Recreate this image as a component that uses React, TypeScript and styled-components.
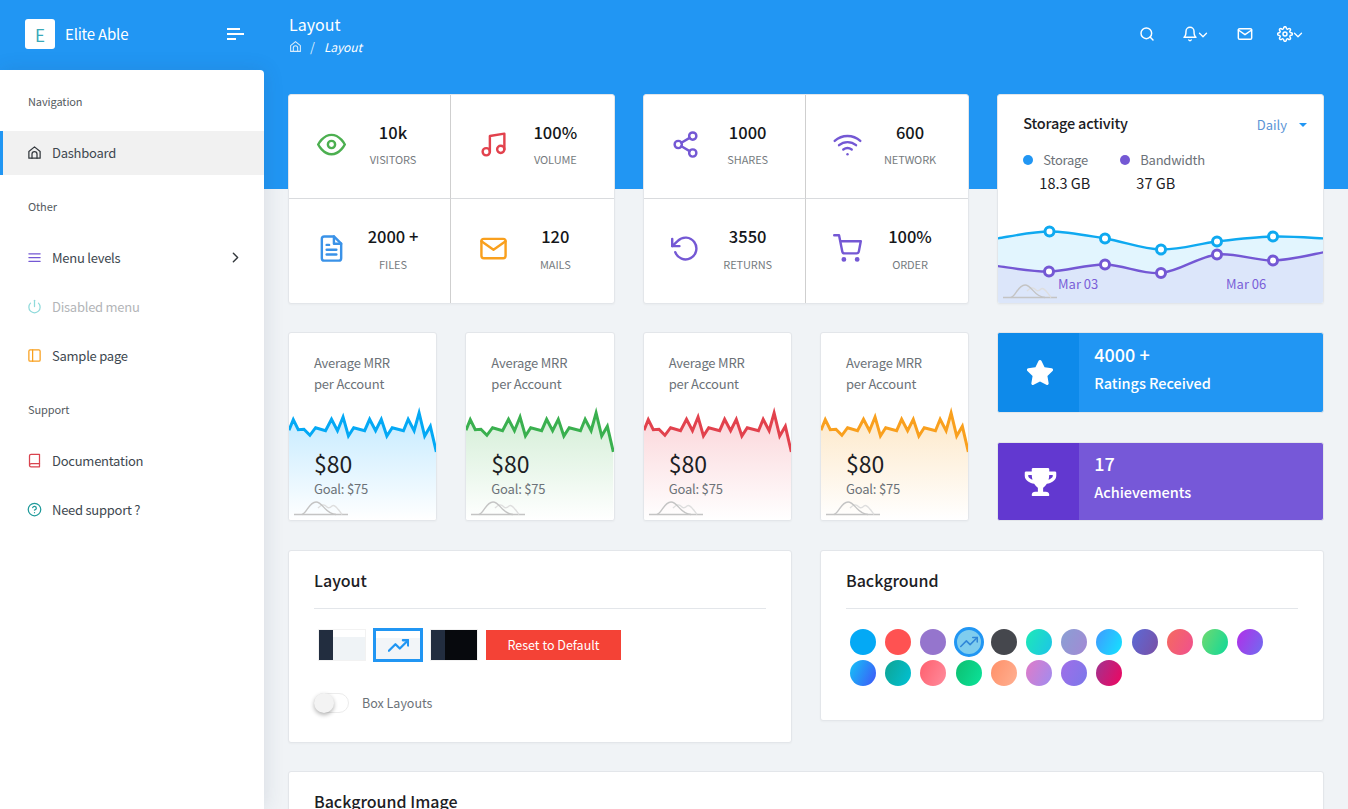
import { ReactNode } from "react";
import styled, { createGlobalStyle } from "styled-components";
import {
  FiBell,
  FiBook,
  FiChevronDown,
  FiChevronRight,
  FiEye,
  FiFileText,
  FiHelpCircle,
  FiMail,
  FiMenu,
  FiMusic,
  FiPower,
  FiRotateCcw,
  FiSearch,
  FiSettings,
  FiShare2,
  FiShoppingCart,
  FiSidebar,
  FiTrendingUp,
  FiWifi,
} from "react-icons/fi";
import { FaStar, FaTrophy } from "react-icons/fa";

const GlobalStyle = createGlobalStyle`
  html, body {
    margin: 0;
    padding: 0;
    overflow: hidden;
  }
  body {
    background: #f0f3f6;
    font-family: "Noto Sans CJK SC", "Source Sans Pro", "Open Sans", sans-serif;
    font-size: 14px;
    line-height: 21px;
    color: #1d2125;
  }
  * {
    box-sizing: border-box;
  }
`;

type Pt = [number, number];

const smoothPath = (pts: Pt[]) => {
  let d = `M${pts[0][0]} ${pts[0][1]}`;
  for (let i = 0; i < pts.length - 1; i++) {
    const p0 = pts[i - 1] || pts[i];
    const p1 = pts[i];
    const p2 = pts[i + 1];
    const p3 = pts[i + 2] || p2;
    const c1x = p1[0] + (p2[0] - p0[0]) / 6;
    const c1y = p1[1] + (p2[1] - p0[1]) / 6;
    const c2x = p2[0] - (p3[0] - p1[0]) / 6;
    const c2y = p2[1] - (p3[1] - p1[1]) / 6;
    d += ` C${c1x} ${c1y} ${c2x} ${c2y} ${p2[0]} ${p2[1]}`;
  }
  return d;
};

const HomeIcon = ({ size = 14 }: { size?: number }) => (
  <svg width={size} height={size} viewBox="0 0 24 24" fill="none" stroke="currentColor" strokeWidth="2" strokeLinejoin="round" strokeLinecap="round">
    <path d="M3 10.5 12 3l9 7.5V21H3z" />
    <path d="M8 21v-6.5a4 4 0 0 1 8 0V21" />
  </svg>
);

const Watermark = () => (
  <WatermarkSvg width="54" height="15" viewBox="0 0 54 15">
    <path d="M0 13.5H54" stroke="#c4c4c4" strokeWidth="1.4" fill="none" />
    <path d="M24 7C28 3 30 3 33 6C35 8 37 6 38 5C41 3 44 8 48 13.5" stroke="#dedede" strokeWidth="1.4" fill="none" />
    <path d="M8 13.5C13 12 15 1 22 1C29 1 31 13 42 13.5" stroke="#c4c4c4" strokeWidth="1.4" fill="none" />
  </WatermarkSvg>
);

interface StatItem {
  icon: ReactNode;
  color: string;
  value: string;
  label: string;
}

const statGroups: StatItem[][] = [
  [
    { icon: <FiEye />, color: "#4caf50", value: "10k", label: "VISITORS" },
    { icon: <FiMusic />, color: "#e2424d", value: "100%", label: "VOLUME" },
    { icon: <FiFileText />, color: "#3a92e8", value: "2000 +", label: "FILES" },
    { icon: <FiMail />, color: "#f9a01e", value: "120", label: "MAILS" },
  ],
  [
    { icon: <FiShare2 />, color: "#7458d4", value: "1000", label: "SHARES" },
    { icon: <FiWifi />, color: "#7458d4", value: "600", label: "NETWORK" },
    { icon: <FiRotateCcw />, color: "#7458d4", value: "3550", label: "RETURNS" },
    { icon: <FiShoppingCart />, color: "#7458d4", value: "100%", label: "ORDER" },
  ],
];

const sparkPoints: Pt[] = [
  [0, 25.3], [4.3, 14.7], [9.3, 24.7], [15, 24.3], [21, 30.3], [26.7, 22.7], [36.7, 25.7], [42.7, 14.3], [48.7, 25.7],
  [54.3, 12], [59.7, 31], [65, 22.7], [76, 25.7], [81, 14.3], [87, 25.7], [92.7, 14.3], [98.3, 31], [103.7, 22.7],
  [115, 25.7], [119.7, 14.3], [125.7, 25.7], [130.7, 8], [136.3, 31], [142, 21.3], [148, 47],
];

const sparkCards = [
  { id: "blue", line: "#04a9f5", top: "#c4eaff" },
  { id: "green", line: "#3ab04f", top: "#d3eed6" },
  { id: "red", line: "#e2424d", top: "#fbd5d9" },
  { id: "orange", line: "#f9a01e", top: "#fde8c8" },
];

const storagePts: Pt[] = [[-1, 13.5], [51.5, 6.5], [107, 13.5], [163, 24.5], [219, 16.5], [275, 11.5], [327, 13.5]];
const bandwidthPts: Pt[] = [[-1, 41], [51, 46.5], [107, 39.5], [163, 48], [219, 29.5], [275, 35.5], [327, 27]];

const swatches = [
  "#04a9f5, #04a9f5", "#ff5252, #ff5252", "#9575cd, #9575cd", "#7fcdee, #7fcdee", "#45474d, #45474d", "#1de9b6, #1dc4e9",
  "#899fd4, #a389d4", "#4099ff, #12e5ff", "#5b6ad6, #7a4fa5", "#f56a5f, #f0508f", "#6fd96f, #0fd99a", "#b22ee8, #6f6df0",
  "#14c4f7, #3f55f8", "#0fa392, #00c2d6", "#ff5f6d, #ff8c9d", "#0dbe6f, #0be39b", "#ff9068, #ffb092", "#e07bc8, #a08cf0",
  "#a06ee8, #7b78ea", "#a03390, #f0055f",
];

const App = () => (
  <Page>
    <GlobalStyle />
    <Header>
      <Brand>
        <LogoBox>E</LogoBox>
        <BrandName>Elite Able</BrandName>
        <Burger width="17" height="12" viewBox="0 0 17 12" stroke="#fff" strokeWidth="1.8">
          <path d="M0 1H13M0 6H17M0 11H9" />
        </Burger>
      </Brand>
      <PageTitle>
        <h1>Layout</h1>
        <Crumbs>
          <HomeIcon size={13} />
          <span>/</span>
          <em>Layout</em>
        </Crumbs>
      </PageTitle>
      <Actions>
        <ActionButton><FiSearch /></ActionButton>
        <ActionButton $gap={27}><FiBell /><FiChevronDown /></ActionButton>
        <ActionButton $gap={27}><FiMail /></ActionButton>
        <ActionButton $gap={24}><FiSettings /><FiChevronDown /></ActionButton>
      </Actions>
    </Header>

    <Body>
      <Sidebar>
        <SectionLabel>Navigation</SectionLabel>
        <NavList>
          <NavItem $active>
            <NavIcon $color="#33383d"><HomeIcon size={15} /></NavIcon>
            Dashboard
          </NavItem>
        </NavList>
        <SectionLabel>Other</SectionLabel>
        <NavList>
          <NavItem>
            <NavIcon $color="#7458d4"><FiMenu /></NavIcon>
            Menu levels
            <NavArrow><FiChevronRight /></NavArrow>
          </NavItem>
          <NavItem $disabled>
            <NavIcon $color="#8fdadb"><FiPower /></NavIcon>
            Disabled menu
          </NavItem>
          <NavItem>
            <NavIcon $color="#f9a01e"><FiSidebar /></NavIcon>
            Sample page
          </NavItem>
        </NavList>
        <SectionLabel>Support</SectionLabel>
        <NavList>
          <NavItem>
            <NavIcon $color="#d9434e"><FiBook /></NavIcon>
            Documentation
          </NavItem>
          <NavItem>
            <NavIcon $color="#1f9a9a"><FiHelpCircle /></NavIcon>
            Need support ?
          </NavItem>
        </NavList>
      </Sidebar>

      <Content>
        <Grid>
          {statGroups.map((group, i) => (
            <StatCard key={i}>
              {group.map((s, j) => (
                <StatCell key={s.label}>
                  <StatIcon $color={s.color}>{s.icon}</StatIcon>
                  <StatText>
                    <StatValue>{s.value}</StatValue>
                    <StatLabel $gap={j > 1 ? 7 : 6}>{s.label}</StatLabel>
                  </StatText>
                </StatCell>
              ))}
            </StatCard>
          ))}

          <StorageCard>
            <StorageTop>
              <StorageHead>
                <StorageTitle>Storage activity</StorageTitle>
                <DailyPicker>Daily<Caret /></DailyPicker>
              </StorageHead>
              <Legend>
                <LegendItem $width={97}>
                  <LegendName><Dot $color="#2196f3" />Storage</LegendName>
                  <LegendValue>18.3 GB</LegendValue>
                </LegendItem>
                <LegendItem>
                  <LegendName><Dot $color="#7458d4" />Bandwidth</LegendName>
                  <LegendValue>37 GB</LegendValue>
                </LegendItem>
              </Legend>
            </StorageTop>
            <ChartBox>
              <svg width="325" height="78" viewBox="0 0 325 78">
                <path d={`${smoothPath(storagePts)} L327 78 L-1 78 Z`} fill="#e2f5fe" />
                <path d={`${smoothPath(bandwidthPts)} L327 78 L-1 78 Z`} fill="#dce6fa" />
                <path d={smoothPath(storagePts)} fill="none" stroke="#0fa9f0" strokeWidth="2.4" />
                <path d={smoothPath(bandwidthPts)} fill="none" stroke="#7458d4" strokeWidth="2.4" />
                {storagePts.slice(1, 6).map(([x, y]) => (
                  <circle key={x} cx={x} cy={y} r="4.5" fill="#fff" stroke="#0fa9f0" strokeWidth="3" />
                ))}
                {bandwidthPts.slice(1, 6).map(([x, y]) => (
                  <circle key={x} cx={x} cy={y} r="4.5" fill="#fff" stroke="#7458d4" strokeWidth="3" />
                ))}
                <ChartLabel x="60" y="64">Mar 03</ChartLabel>
                <ChartLabel x="228" y="64">Mar 06</ChartLabel>
              </svg>
              <Watermark />
            </ChartBox>
          </StorageCard>

          {sparkCards.map((c) => (
            <SparkCard key={c.id}>
              <SparkChart viewBox="0 -3 148 118" preserveAspectRatio="none">
                <defs>
                  <linearGradient id={`spark-${c.id}`} x1="0" y1="0" x2="0" y2="1">
                    <stop offset="0" stopColor={c.top} />
                    <stop offset="1" stopColor="#fff" />
                  </linearGradient>
                </defs>
                <path
                  d={`M${sparkPoints.map((p) => p.join(" ")).join(" L")} L148 115 L0 115 Z`}
                  fill={`url(#spark-${c.id})`}
                />
                <path
                  d={`M${sparkPoints.map((p) => p.join(" ")).join(" L")}`}
                  fill="none"
                  stroke={c.line}
                  strokeWidth="3"
                />
              </SparkChart>
              <SparkTitle>Average MRR<br />per Account</SparkTitle>
              <SparkValue>$80</SparkValue>
              <SparkGoal>Goal: $75</SparkGoal>
              <Watermark />
            </SparkCard>
          ))}

          <BadgeColumn>
            <BadgeCard $bg="#2196f3" $height={81}>
              <BadgeIcon $bg="#0e8aea" $size={25}><FaStar /></BadgeIcon>
              <BadgeText>
                <BadgeValue>4000 +</BadgeValue>
                <BadgeLabel>Ratings Received</BadgeLabel>
              </BadgeText>
            </BadgeCard>
            <BadgeCard $bg="#7658d8" $height={79}>
              <BadgeIcon $bg="#6238d0" $size={28}><FaTrophy /></BadgeIcon>
              <BadgeText>
                <BadgeValue>17</BadgeValue>
                <BadgeLabel>Achievements</BadgeLabel>
              </BadgeText>
            </BadgeCard>
          </BadgeColumn>

          <PanelCard $span={6} $height={193}>
            <PanelTitle>Layout</PanelTitle>
            <ThemeRow>
              <ThemeThumb $side="#222d3f" $main="#eff3f6" $strip="#fff" />
              <ThemeSelected><FiTrendingUp /></ThemeSelected>
              <ThemeThumb $side="#222d3f" $main="#07090d" $strip="#07090d" />
              <ResetButton>Reset to Default</ResetButton>
            </ThemeRow>
            <ToggleRow>
              <Toggle><Knob /></Toggle>
              <ToggleLabel>Box Layouts</ToggleLabel>
            </ToggleRow>
          </PanelCard>

          <PanelCard $span={6} $height={171}>
            <PanelTitle>Background</PanelTitle>
            <SwatchGrid>
              {swatches.map((g, i) => (
                <Swatch key={g} $gradient={g} $selected={i === 3}>
                  {i === 3 && <FiTrendingUp />}
                </Swatch>
              ))}
            </SwatchGrid>
          </PanelCard>

          <PanelCard $span={12} $height={120}>
            <PanelTitle>Background Image</PanelTitle>
          </PanelCard>
        </Grid>
      </Content>
    </Body>
  </Page>
);

export default App;

const Page = styled.div`
  width: 100%;
  height: 809px;
  overflow: hidden;
  background: #2196f3;
`;

const Header = styled.header`
  display: flex;
  align-items: center;
  height: 70px;
  color: #fff;
`;

const Brand = styled.div`
  display: flex;
  align-items: center;
  width: 264px;
  padding: 0 20px 2px 25px;
`;

const LogoBox = styled.div`
  display: flex;
  align-items: center;
  justify-content: center;
  width: 30px;
  height: 30px;
  border-radius: 3px;
  background: #fff;
  color: #3aa9b8;
  font-size: 17px;
`;

const BrandName = styled.span`
  margin-left: 10px;
  font-size: 15px;
  letter-spacing: -0.2px;
  line-height: 20px;
  padding-bottom: 1px;
`;

const Burger = styled.svg`
  margin-left: auto;
`;

const PageTitle = styled.div`
  padding: 0 0 1px 25px;

  h1 {
    margin: 0;
    font-size: 16px;
    font-weight: 400;
    line-height: 22px;
  }
`;

const Crumbs = styled.div`
  display: flex;
  align-items: center;
  gap: 8px;
  height: 20px;
  margin-top: 2px;
  font-size: 12.5px;
  color: #d9ecfc;

  em {
    margin-left: 1px;
    color: #fff;
    font-size: 12px;
    letter-spacing: -0.1px;
  }
`;

const Actions = styled.div`
  display: flex;
  align-items: center;
  margin-left: auto;
  padding: 0 43px 2px 0;
`;

const ActionButton = styled.div<{ $gap?: number }>`
  display: flex;
  align-items: center;
  margin-left: ${(p) => p.$gap || 0}px;
  color: #fff;

  svg {
    width: 16px;
    height: 16px;
    stroke-width: 2.2;
  }
  svg + svg {
    width: 14px;
    height: 14px;
    margin-left: -2px;
    margin-top: 1px;
  }
`;

const Body = styled.div`
  display: flex;
  align-items: stretch;
  height: 739px;
  background: linear-gradient(#2196f3 119px, #f0f3f6 119px);
`;

const Sidebar = styled.aside`
  flex: none;
  width: 264px;
  padding-top: 24px;
  background: #fff;
  border-top-right-radius: 4px;
  box-shadow: 1px 0 20px rgba(40, 60, 90, 0.12);
  position: relative;
`;

const SectionLabel = styled.div`
  height: 16px;
  margin: 0 0 21px 28px;
  font-size: 11px;
  letter-spacing: -0.1px;
  line-height: 14px;
  color: #555b61;
`;

const NavList = styled.div`
  display: flex;
  flex-direction: column;
  gap: 5px;
  margin-bottom: 24px;
`;

const NavItem = styled.div<{ $active?: boolean; $disabled?: boolean }>`
  display: flex;
  align-items: center;
  height: 44px;
  padding: 0 20px 2px 24px;
  border-left: 3px solid ${(p) => (p.$active ? "#2196f3" : "transparent")};
  background: ${(p) => (p.$active ? "#f1f1f1" : "transparent")};
  color: ${(p) => (p.$disabled ? "#b3b5b8" : "#3e4850")};
  font-size: 13px;
  letter-spacing: -0.25px;
`;

const NavIcon = styled.span<{ $color: string }>`
  display: flex;
  width: 25px;
  color: ${(p) => p.$color};

  svg {
    width: 15px;
    height: 15px;
  }
`;

const NavArrow = styled.span`
  display: flex;
  margin-left: auto;
  color: #33383d;

  svg {
    width: 17px;
    height: 17px;
  }
`;

const Content = styled.main`
  flex: 1;
  padding: 24px;
`;

const Grid = styled.div`
  display: grid;
  grid-template-columns: repeat(12, 1fr);
  column-gap: 28px;
  row-gap: 28px;
  align-items: start;
`;

const Card = styled.div`
  background: #fff;
  border: 1px solid #e3e6ea;
  border-radius: 3px;
  box-shadow: 0 1px 2px rgba(0, 0, 0, 0.03);
`;

const StatCard = styled(Card)`
  grid-column: span 4;
  display: grid;
  grid-template-columns: 1fr 1fr;
  grid-template-rows: 104px 1fr;
  height: 210px;
`;

const StatCell = styled.div`
  display: grid;
  grid-template-columns: 36px 84px;
  column-gap: 2px;
  align-items: center;
  padding: 0 0 5px 24px;

  &:nth-child(odd) {
    border-right: 1px solid #cfcfcf;
  }
  &:nth-child(-n + 2) {
    border-bottom: 1px solid #d9dbde;
  }
`;

const StatIcon = styled.div<{ $color: string }>`
  display: flex;
  justify-content: center;
  color: ${(p) => p.$color};

  svg {
    width: 29px;
    height: 29px;
    stroke-width: 2;
  }
`;

const StatText = styled.div`
  text-align: center;
`;

const StatValue = styled.div`
  font-size: 16.5px;
  font-weight: 500;
  line-height: 24px;
  color: #14171a;
`;

const StatLabel = styled.div<{ $gap: number }>`
  margin-top: ${(p) => p.$gap}px;
  font-size: 11px;
  letter-spacing: -0.1px;
  line-height: 18px;
  color: #767b80;
`;

const StorageCard = styled(Card)`
  grid-column: span 4;
  display: flex;
  flex-direction: column;
  height: 210px;
  overflow: hidden;
`;

const StorageTop = styled.div`
  padding: 16px 16px 0 25px;
`;

const StorageHead = styled.div`
  display: flex;
  align-items: center;
  justify-content: space-between;
`;

const StorageTitle = styled.div`
  font-size: 14.5px;
  font-weight: 500;
  letter-spacing: -0.2px;
  line-height: 22px;
  color: #1c2024;
`;

const DailyPicker = styled.div`
  display: flex;
  align-items: center;
  gap: 12px;
  padding-top: 3px;
  font-size: 13px;
  color: #5b94d6;
`;

const Caret = styled.span`
  width: 0;
  height: 0;
  border-left: 4px solid transparent;
  border-right: 4px solid transparent;
  border-top: 4px solid #2196f3;
`;

const Legend = styled.div`
  display: flex;
  margin-top: 14px;
`;

const LegendItem = styled.div<{ $width?: number }>`
  width: ${(p) => (p.$width ? `${p.$width}px` : "auto")};
`;

const LegendName = styled.div`
  display: flex;
  align-items: center;
  font-size: 13px;
  letter-spacing: -0.25px;
  line-height: 21px;
  color: #6c7278;
`;

const Dot = styled.span<{ $color: string }>`
  width: 10px;
  height: 10px;
  margin-right: 10px;
  border-radius: 50%;
  background: ${(p) => p.$color};
`;

const LegendValue = styled.div`
  margin: 2px 0 0 16px;
  font-size: 14.5px;
  line-height: 22px;
  color: #1c2024;
`;

const ChartBox = styled.div`
  position: relative;
  height: 78px;
  margin-top: auto;

  svg {
    display: block;
  }
`;

const ChartLabel = styled.text`
  font-size: 13px;
  fill: #7a5fd8;
`;

const WatermarkSvg = styled.svg`
  position: absolute;
  left: 5px;
  bottom: 4px;
  z-index: 2;
`;

const SparkCard = styled(Card)`
  grid-column: span 2;
  position: relative;
  height: 189px;
  padding: 19px 0 0 25px;
  overflow: hidden;
`;

const SparkChart = styled.svg`
  position: absolute;
  left: 0;
  bottom: 0;
  width: 100%;
  height: 118px;
`;

const SparkTitle = styled.div`
  position: relative;
  font-size: 13px;
  letter-spacing: -0.2px;
  line-height: 21px;
  color: #6c7278;
`;

const SparkValue = styled.div`
  position: relative;
  margin-top: 52px;
  font-size: 23px;
  line-height: 34px;
  color: #1c2024;
`;

const SparkGoal = styled.div`
  position: relative;
  margin-top: -1px;
  font-size: 13px;
  letter-spacing: -0.2px;
  line-height: 20px;
  color: #6c7278;
`;

const BadgeColumn = styled.div`
  grid-column: span 4;
  display: flex;
  flex-direction: column;
  gap: 29px;
  height: 189px;
`;

const BadgeCard = styled.div<{ $bg: string; $height: number }>`
  display: flex;
  height: ${(p) => p.$height}px;
  border: 1px solid #e3e6ea;
  border-radius: 3px;
  overflow: hidden;
  background: ${(p) => p.$bg};
  color: #fff;
`;

const BadgeIcon = styled.div<{ $bg: string; $size: number }>`
  display: flex;
  align-items: center;
  justify-content: center;
  width: 81px;
  padding-left: 3px;
  background: ${(p) => p.$bg};

  svg {
    width: ${(p) => p.$size + 7}px;
    height: ${(p) => p.$size}px;
  }
`;

const BadgeText = styled.div`
  display: flex;
  flex-direction: column;
  justify-content: center;
  padding: 0 0 10px 15px;
`;

const BadgeValue = styled.div`
  font-size: 18px;
  font-weight: 500;
  line-height: 27px;
`;

const BadgeLabel = styled.div`
  margin-top: 3px;
  font-size: 14.5px;
  font-weight: 500;
  letter-spacing: -0.05px;
  line-height: 24px;
`;

const PanelCard = styled(Card)<{ $span: number; $height: number }>`
  grid-column: span ${(p) => p.$span};
  height: ${(p) => p.$height}px;
  margin-top: 1px;
  padding: 17px 25px 0;

  &:last-child {
    margin-top: 0;
  }
`;

const PanelTitle = styled.div`
  height: 41px;
  border-bottom: 1px solid #e3e6ea;
  font-size: 16px;
  font-weight: 500;
  line-height: 24px;
  color: #1c2024;
`;

const ThemeRow = styled.div`
  display: flex;
  align-items: center;
  gap: 8px;
  margin: 19px 0 0 5px;
`;

const ThemeThumb = styled.div<{ $side: string; $main: string; $strip: string }>`
  width: 46px;
  height: 30px;
  background: linear-gradient(${(p) => p.$strip} 7px, transparent 7px),
    ${(p) => p.$main};
  border-left: 14px solid ${(p) => p.$side};
  box-shadow: 0 0 0 1px rgba(0, 0, 0, 0.05);
`;

const ThemeSelected = styled.div`
  display: flex;
  align-items: center;
  justify-content: center;
  width: 50px;
  height: 34px;
  border: 3px solid #2196f3;
  background: linear-gradient(#fff 7px, #f2f5f8 7px);
  color: #2196f3;

  svg {
    width: 21px;
    height: 21px;
    stroke-width: 2.6;
  }
`;

const ResetButton = styled.div`
  width: 135px;
  height: 30px;
  margin-left: 1px;
  background: #f44236;
  color: #fff;
  font-size: 12.5px;
  line-height: 30px;
  text-align: center;
`;

const ToggleRow = styled.div`
  display: flex;
  align-items: center;
  gap: 13px;
  margin-top: 30px;
`;

const Toggle = styled.div`
  position: relative;
  width: 35px;
  height: 20px;
  border: 1px solid #ececec;
  border-radius: 10px;
  background: #fff;
`;

const Knob = styled.span`
  position: absolute;
  left: -1px;
  top: -1px;
  width: 20px;
  height: 20px;
  border-radius: 50%;
  background: #f3f3f3;
  box-shadow: 0 2px 4px rgba(0, 0, 0, 0.3);
`;

const ToggleLabel = styled.span`
  font-size: 12.5px;
  color: #6c7278;
`;

const SwatchGrid = styled.div`
  display: grid;
  grid-template-columns: repeat(12, 26px);
  column-gap: 9.2px;
  row-gap: 4.5px;
  margin: 20px 0 0 4px;
`;

const Swatch = styled.div<{ $gradient: string; $selected?: boolean }>`
  display: flex;
  align-items: center;
  justify-content: center;
  width: 26px;
  height: 26px;
  border-radius: 50%;
  background: linear-gradient(115deg, ${(p) => p.$gradient});
  color: #2f86d8;
  ${(p) => (p.$selected ? "outline: 3px solid #2196f3; outline-offset: -1px;" : "")}

  svg {
    width: 18px;
    height: 18px;
  }
`;
